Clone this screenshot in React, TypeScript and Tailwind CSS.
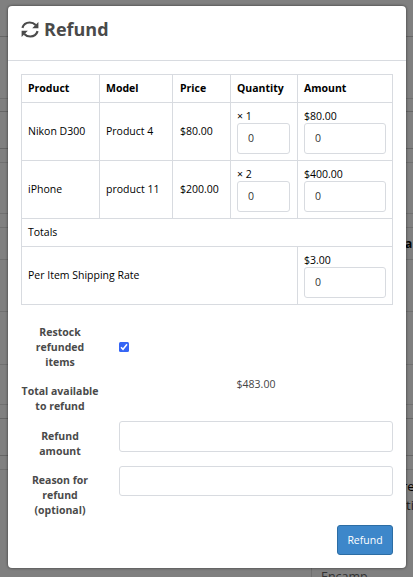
import type { ReactNode } from "react";

const products = [
  { name: "Nikon D300", model: "Product 4", price: "$80.00", qty: "× 1", amount: "$80.00" },
  { name: "iPhone", model: "product 11", price: "$200.00", qty: "× 2", amount: "$400.00" },
];

const cell = "border border-[#d8dbe0] px-1.5 py-0 text-left";
const priceCell = "border border-[#d8dbe0] py-0 pl-[7px] text-left";

function Field({ label, width }: { label: string; width: string }) {
  return (
    <div className="flex h-[57px] flex-col pt-1.5">
      <span className="h-3.5 leading-[15px]">{label}</span>
      <input
        defaultValue="0"
        className={`${width} h-[31px] rounded-[3px] border border-[#d8dbe0] bg-white px-2.5 pb-[2px] text-[10.5px] text-[#333] outline-none`}
      />
    </div>
  );
}

function Label({ children }: { children: ReactNode }) {
  return (
    <label className="w-[78px] shrink-0 text-center text-[10.5px] leading-[15px] font-bold text-[#4a4a4a]">
      {children}
    </label>
  );
}

function Line({ height, dark }: { height: string; dark?: boolean }) {
  return <div className={`${height} shrink-0 border-b ${dark ? "border-[#666]" : "border-[#707070]"}`} />;
}

function OrderPage() {
  return (
    <div className="flex h-[577px] flex-col overflow-hidden bg-[#808080]">
      <Line height="h-[37px]" dark />
      <Line height="h-[62px]" />
      <Line height="h-[13px]" dark />
      <Line height="h-[37px]" dark />
      <Line height="h-[14px]" />
      <Line height="h-[51px]" />
      <Line height="h-[14px]" />
      <div className="h-8 shrink-0 border-b border-[#707070] pt-[7px] pl-[405px] text-[12px] font-bold text-black">a</div>
      <Line height="h-[52px]" />
      <Line height="h-[53px]" />
      <Line height="h-[40px]" />
      <Line height="h-[14px]" dark />
      <Line height="h-[37px]" dark />
      <Line height="h-[14px]" />
      <div className="h-[98px] shrink-0 pt-[7px] pl-[402px] text-[13px] leading-[19px] text-[#1c1c1c]">
        <p className="font-medium text-black">re</p>
        <p className="pl-[4px]">ti</p>
      </div>
      <div className="ml-[311px] h-3 shrink-0 border-l border-[#707070] pl-[9px] text-[12.5px] leading-[18px] text-[#333]">Encamp</div>
    </div>
  );
}

export default function App() {
  return (
    <div className="relative h-[577px] w-[413px] overflow-hidden font-['Open_Sans',sans-serif]">
      <OrderPage />
      <section className="absolute top-1.5 left-2 flex h-[562px] w-[398px] flex-col rounded-[4px] bg-white shadow-[0_0_3px_rgba(0,0,0,0.6)]">
        <header className="flex h-[55px] shrink-0 items-start border-b border-[#d8dbe0] pt-[11px] pl-[13px] text-[#4a4a4a]">
          <svg viewBox="0 0 18 17" className="mt-[4px] h-[17px] w-[18px]" fill="none" stroke="currentColor" strokeWidth="2.2">
            <path d="M1.4 6.8C2.4 3.6 5.3 1.5 8.7 1.5c2.4 0 4.4.9 6 2.6" />
            <path d="M16.6 10.2c-1 3.2-3.9 5.3-7.3 5.3-2.4 0-4.4-.9-6-2.6" />
            <path d="M17.4 1v6.2h-6.2zM.6 16V9.8h6.2z" fill="currentColor" stroke="none" />
          </svg>
          <h1 className="ml-[5px] text-[18px] leading-6 font-bold">Refund</h1>
        </header>

        <div className="px-[13px] pt-[13px]">
          <table className="w-[372px] table-fixed border-collapse text-[10.5px] text-black">
            <colgroup>
              <col className="w-[78px]" />
              <col className="w-[73px]" />
              <col className="w-[58px]" />
              <col className="w-[67px]" />
              <col className="w-[95px]" />
            </colgroup>
            <thead>
              <tr className="h-7">
                {["Product", "Model", "Price", "Quantity", "Amount"].map((title) => (
                  <th key={title} className={`${title === "Price" ? priceCell : cell} font-bold`}>{title}</th>
                ))}
              </tr>
            </thead>
            <tbody>
              {products.map((p) => (
                <tr key={p.name} className="h-[58px]">
                  <td className={cell}>{p.name}</td>
                  <td className={cell}>{p.model}</td>
                  <td className={priceCell}>{p.price}</td>
                  <td className={cell}><Field label={p.qty} width="w-[53px]" /></td>
                  <td className={cell}><Field label={p.amount} width="w-[82px]" /></td>
                </tr>
              ))}
              <tr className="h-7">
                <td className={cell} colSpan={5}>Totals</td>
              </tr>
              <tr className="h-[58px]">
                <td className={cell} colSpan={4}>Per Item Shipping Rate</td>
                <td className={cell}><Field label="$3.00" width="w-[82px]" /></td>
              </tr>
            </tbody>
          </table>

          <form className="flex flex-col pt-5">
            <div className="flex h-[59px] gap-5">
              <Label>Restock refunded items</Label>
              <span className="mt-[17px] flex h-2.5 w-2.5 items-center justify-center rounded-[1.5px] bg-[#3565f5]">
                <svg viewBox="0 0 10 10" className="h-2.5 w-2.5" fill="none" stroke="white" strokeWidth="1.5">
                  <path d="M2 5.3 4 7.3 8 2.3" />
                </svg>
              </span>
            </div>
            <div className="flex h-[45px] gap-5">
              <Label>Total available to refund</Label>
              <span className="w-[274px] text-center text-[10.5px] leading-[1px] text-[#444]">$483.00</span>
            </div>
            <div className="flex h-11 gap-5">
              <Label>Refund amount</Label>
              <input className="-mt-2 h-[31px] w-[274px] rounded-[3px] border border-[#d8dbe0]" />
            </div>
            <div className="flex h-[67px] gap-5">
              <Label>Reason for refund (optional)</Label>
              <input className="-mt-[7px] h-[30px] w-[274px] rounded-[3px] border border-[#d8dbe0]" />
            </div>
            <button type="button" className="mt-[-15px] h-[30px] w-14 self-end rounded-[3px] border border-[#2c6da4] bg-[#3d87ca] text-[10.5px] leading-[14px] font-medium text-white">
              Refund
            </button>
          </form>
        </div>
      </section>
    </div>
  );
}
